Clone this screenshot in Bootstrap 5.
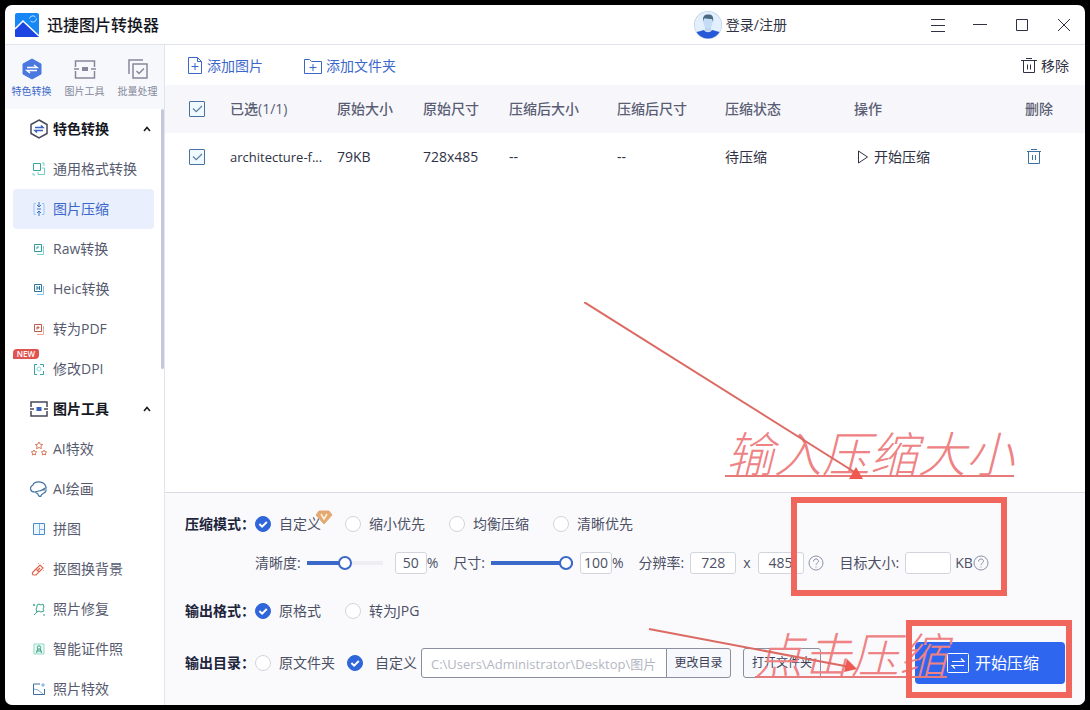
<!DOCTYPE html>
<html lang="zh-CN">
<head>
<meta charset="utf-8">
<meta name="viewport" content="width=device-width, initial-scale=1">
<title>迅捷图片转换器</title>
<link rel="stylesheet" href="https://cdn.jsdelivr.net/npm/bootstrap@5.3.0/dist/css/bootstrap.min.css">
<style>
:root{--ink:#2f3244;--soft:#565a6e;--brand:#3b67cb;--line:#d9dbe4}
body{background:#000;font:14px/20px "Open Sans","Noto Sans CJK SC",sans-serif;color:var(--ink);padding:5px;height:100vh;overflow:hidden}
button{background:none;border:0;padding:0;color:inherit;white-space:nowrap}
a{color:inherit;text-decoration:none}
svg{flex:none;display:block}
svg:not([stroke]){stroke:currentColor}
svg:not([fill]){fill:none}
.app-window{background:#fff;border-radius:7px;height:100%}
.title-bar{height:40px;border-bottom:1px solid #e1e3ea;padding-left:9px}
.app-name{font-size:16px;font-weight:500;color:#15171f;margin-left:7px}
.win-btn{width:42px;height:39px}
.account{margin-right:130px}
.side-bar{width:160px;border-right:1px solid #e2e4ec}
.mode-tabs{height:64px;background:#f7f8fc;padding-top:13px;color:#85889b;font-size:10px;line-height:14px}
.mode-tabs button{flex:1;min-width:0}
.mode-tabs .on{color:var(--brand)}
.side-scroll{padding:0 10px 0 8px}
.thumb-bar{width:3px;height:260px;right:0;top:0;background:#c5c8d8;border-radius:2px}
.side-item{height:40px;padding:0 3px 0 17px;gap:5px;color:var(--soft);border-radius:4px;flex:none}
.side-item.on{background:#e9effc;color:var(--brand)}
.side-head{font-weight:600;color:#15171f}
.new-tag{left:0;top:0;width:26px;height:10px;background:#e0544f;color:#fff;font-size:8px;line-height:10px;font-weight:600;border-radius:4px 2px 4px 0;text-align:center}
.tool-bar{height:40px;padding:2px 16px 0 22px;color:var(--brand)}
.add-folder{margin-left:41px}
.remove-all{color:var(--ink)}
.files{table-layout:fixed;width:100%}
.files th,.files td{height:48px;padding:0;white-space:nowrap}
.files thead{background:#f7f7fb;color:#5a5e74}
.files th{font-weight:500}
.files th:first-child,.files td:first-child{padding-left:24px}
.files .fname{font-size:13px}
.del-btn{color:#3d6f9f}
.w-tick{width:65px}.w-name{width:107px}.w-after{width:108px}.w-orig{width:86px}.w-state{width:129px}.w-del{width:60px}
.tick{appearance:none;width:16px;height:16px;border:1px solid #48719f;border-radius:1px;display:block;background:#f0fafe url("data:image/svg+xml,%3Csvg xmlns='http://www.w3.org/2000/svg' viewBox='0 0 14 14'%3E%3Cpath d='M3 6.5l3.2 3.2L12 4' fill='none' stroke='%23567fa6' stroke-width='1.2'/%3E%3C/svg%3E") center/14px}
.setup{background:#fafafd;border-top:1px solid var(--line);padding:20px 20px 21px;color:#4c5064;border-radius:0 0 7px 0}
.setup-row{min-height:22px;white-space:nowrap}
.row-name{width:70px;font-weight:600;color:#20243a}
.pick{gap:8px;margin-right:24px}
.pick-near{margin-right:12px}
.pick-dir{gap:12px;margin-right:4px}
.pick input{appearance:none;width:16px;height:16px;border:1px solid #d4d5dc;border-radius:50%;background:#fff;flex:none;margin:0}
.pick input:checked{border-color:#2f66da;background:#2f66da url("data:image/svg+xml,%3Csvg xmlns='http://www.w3.org/2000/svg' viewBox='0 0 14 14'%3E%3Cpath d='M3.4 7l2.7 2.6L10.8 5' fill='none' stroke='%23fff' stroke-width='2'/%3E%3C/svg%3E") center/14px}
.vip{left:60px;top:-4px}
.fine-row{margin:17px 0 26px 70px}
.fine-row label{margin-right:6px}
.fine-row .unit{margin-right:15px}
.fine-row .times{margin:0 7px}
.slide{appearance:none;height:14px;width:76px;background:linear-gradient(90deg,#3a69c9 50%,#eeeef3 50%) center/100% 4px no-repeat;margin:0 12px 0 0}
.slide-full{width:82px;background:linear-gradient(#3a69c9,#3a69c9) center/100% 4px no-repeat;margin-right:7px}
.slide::-webkit-slider-thumb{appearance:none;width:14px;height:14px;border:2px solid #3a69c9;border-radius:50%;background:#fff}
.num-box{width:46px;height:22px;border:1px solid #d3d5de;border-radius:3px;background:#fff;color:#4c5064;text-align:center;padding:0 0 1px}
.num-small{width:32px}
.path-box{width:246px;height:30px;border:1px solid #8a8e9e;border-radius:3px 0 0 3px;background:#fff;color:#b4b7c2;padding:0 9px;font-size:13px}
.side-btn{height:30px;font-size:12px;border:1px solid #8a8e9e;background:#f7f8fc;color:#3c4158}
.side-btn.join{width:65px;margin-left:-1px;border-radius:0 3px 3px 0}
.side-btn.alone{width:78px;margin-left:12px;border-radius:3px}
.dir-row{margin-top:20px}
.go-btn{width:150px;height:42px;background:#2f66f0;color:#fff;font-size:16px;border-radius:4px;gap:6px;padding-left:6px}
.notes{right:0;bottom:0;pointer-events:none}
.notes text{font:italic 300 48px "Noto Sans CJK SC",sans-serif;fill:#ee8284;stroke:none}
</style>
</head>
<body class="position-relative">
<div class="app-window d-flex flex-column overflow-hidden">
  <header class="title-bar d-flex align-items-center flex-shrink-0">
    <svg width="26" height="26" viewBox="0 0 26 26" stroke="none"><rect x="1" y="1" width="24" height="24" rx="2" fill="#1687f5"/><path d="M1 17L9 9l16 15a1 1 0 0 1-1 1H2a1 1 0 0 1-1-1z" fill="#1b44e0"/><path d="M1 17L9 9l16 15" stroke="#fff" stroke-width="1.600" fill="none"/><path d="M15.500 6.500a3.500 3.500 0 0 1 6-1.500M22.500 6.500a3.500 3.500 0 0 1-6 2.500" stroke="#bfe2ff" fill="none"/></svg>
    <span class="app-name">迅捷图片转换器</span>
    <button class="account ms-auto d-flex align-items-center gap-1">
      <svg width="28" height="28" viewBox="0 0 28 28" stroke="none"><defs><clipPath id="face"><circle cx="14" cy="14" r="13.500"/></clipPath></defs><circle cx="14" cy="14" r="14" fill="#bfd0e4"/><g clip-path="url(#face)"><circle cx="14" cy="14" r="13.500" fill="#e2effd"/><path d="M1 28v-6c3-2 7-2 9-3 2 3 6 3 8 0 3 1 6 1 9 3v6z" fill="#2559d8"/><path d="M11 14h6v5c-1 2-5 2-6 0z" fill="#b9d3f1"/><ellipse cx="14" cy="11.500" rx="4.500" ry="6" fill="#c5dcf6"/><path d="M9 11V7c1-3 3-4 5-3.500 4-.5 6 2 5 7.500l-1-3c-3 0-5-.5-8-.5z" fill="#4c6a83"/></g></svg>
      <span>登录/注册</span></button>
    <button class="win-btn d-flex align-items-center justify-content-center" aria-label="菜单"><svg width="16" height="16" viewBox="0 0 16 16"><path d="M1 2.500h14M1 8.500h14M1 14.500h14"/></svg></button>
    <button class="win-btn d-flex align-items-center justify-content-center" aria-label="最小化"><svg width="16" height="16" viewBox="0 0 16 16"><path d="M1 7.500h14"/></svg></button>
    <button class="win-btn d-flex align-items-center justify-content-center" aria-label="最大化"><svg width="16" height="16" viewBox="0 0 16 16"><path d="M2.500 2.500h11v11h-11z"/></svg></button>
    <button class="win-btn d-flex align-items-center justify-content-center" aria-label="关闭"><svg width="16" height="16" viewBox="0 0 16 16"><path d="M2 2l12 12M14 2L2 14"/></svg></button>
  </header>

  <div class="d-flex flex-grow-1 overflow-hidden">
    <aside class="side-bar d-flex flex-column flex-shrink-0">
      <div class="mode-tabs d-flex flex-shrink-0">
        <button class="on d-flex flex-column align-items-center gap-1"><svg width="22" height="22" viewBox="0 0 22 22"><path d="M11 1l9 5v10l-9 5-9-5V6z" fill="#4a78df" stroke="#4a78df" stroke-linejoin="round"/><path d="M6 9.500h10l-3-2.500M16 12.500H6l3 2.500" stroke="#fff" stroke-width="1.500"/></svg>特色转换</button>
        <button class="d-flex flex-column align-items-center gap-1"><svg width="22" height="22" viewBox="0 0 22 22" stroke-width="1.500"><path d="M1.500 9V3h19v6M1.500 13v7h19v-7M0 11h5M17 11h5"/><path d="M8 9h6v4H8z" fill="currentColor" stroke="none"/></svg>图片工具</button>
        <button class="d-flex flex-column align-items-center gap-1"><svg width="22" height="22" viewBox="0 0 22 22" stroke-width="1.500"><path d="M2 16V2h14M6 6h14v14H6zM9.500 13l2.500 2.500 5-5"/></svg>批量处理</button>
      </div>
      <div class="flex-grow-1 position-relative overflow-hidden">
      <nav class="side-scroll d-flex flex-column">
        <a href="#" class="side-item side-head d-flex align-items-center"><svg width="18" height="20" viewBox="0 0 18 20"><path d="M9 1l8 4.500v9L9 19l-8-4.500v-9z" stroke="#454958" stroke-width="1.500"/><path d="M5 8.500h8l-2-2M13 11.500H5l2 2" stroke="#3b62c0" stroke-width="1.500"/></svg>特色转换<svg class="ms-auto" width="8" height="6" viewBox="0 0 8 6" stroke-width="1.500"><path d="M1 5l3-3.500L7 5"/></svg></a>
        <a href="#" class="side-item d-flex align-items-center"><svg width="18" height="18" viewBox="0 0 18 18"><path d="M3.500 3.500h7v7h-7z" stroke="#35a79e"/><path d="M12 3h2v3M8 12v2.500h6.500V8H12M3 13v2h2" stroke="#71cfc5"/></svg>通用格式转换</a>
        <a href="#" class="side-item on d-flex align-items-center"><svg width="18" height="18" viewBox="0 0 18 18"><path d="M6 3.500H4v11h2M12 3.500h2v11h-2" stroke="#9cc5f1"/><path d="M9 2v5M7 5l2 2 2-2M9 16v-5M7 13l2-2 2 2M7 9h4" stroke="#3673c5"/></svg>图片压缩</a>
        <a href="#" class="side-item d-flex align-items-center"><svg width="18" height="18" viewBox="0 0 18 18"><path d="M7 14.500h6.500V6" stroke="#7fd4d0"/><path d="M4.500 4.500h7v7h-7zM7 9V7h2" stroke="#319b98"/></svg>Raw转换</a>
        <a href="#" class="side-item d-flex align-items-center"><svg width="18" height="18" viewBox="0 0 18 18"><path d="M7 14.500h6.500V6" stroke="#7cc9ee"/><path d="M4.500 4.500h7v7h-7zM7 6v4M9.500 6v4M7 8h2" stroke="#2b7597"/></svg>Heic转换</a>
        <a href="#" class="side-item d-flex align-items-center"><svg width="18" height="18" viewBox="0 0 18 18"><path d="M7 14.500h6.500V6" stroke="#f1a794"/><path d="M4.500 4.500h7v7h-7zM7 9.500V7h2v1H7" stroke="#bd5b4c"/></svg>转为PDF</a>
        <a href="#" class="side-item position-relative d-flex align-items-center"><span class="new-tag position-absolute">NEW</span><svg width="18" height="18" viewBox="0 0 18 18"><path d="M7 4.500H4.500v10H7M10 4.500h3.500V7M13.500 11v3.500H10" stroke="#35a5a2"/><circle cx="9" cy="9" r="2" stroke="#8bd7d4"/></svg>修改DPI</a>
        <a href="#" class="side-item side-head d-flex align-items-center"><svg width="18" height="16" viewBox="0 0 18 16" stroke="#454958" stroke-width="1.500"><path d="M1 6V1h16v5M1 10v5h16v-5M0 8h4M14 8h4"/><path d="M6.500 6h5v4h-5z" fill="#3b62c0" stroke="none"/></svg>图片工具<svg class="ms-auto" width="8" height="6" viewBox="0 0 8 6" stroke-width="1.500"><path d="M1 5l3-3.500L7 5"/></svg></a>
        <a href="#" class="side-item d-flex align-items-center"><svg width="18" height="18" viewBox="0 0 18 18" stroke="#d8765b"><path d="M9 2l1.200 2.200 2.500.3-1.800 1.700.5 2.500L9 7.500 6.600 8.700l.5-2.500-1.800-1.700 2.500-.3zM4 10l.9 1.700 1.800.2-1.300 1.200.3 1.900L4 14.200 2.300 15l.3-1.900-1.300-1.200 1.800-.2zM14 10l.9 1.700 1.800.2-1.300 1.200.3 1.900-1.700-.8-1.700.8.3-1.900-1.300-1.200 1.800-.2z"/></svg>AI特效</a>
        <a href="#" class="side-item d-flex align-items-center"><svg width="18" height="18" viewBox="0 0 18 18" stroke="#40739f" stroke-width="1.200"><path d="M5 12C0 12-1 7 3 5c1-4 11-5 13 2M17 8c-2-1-5 3-8 3l-4 1 3 2c0 2 2 3 3 2 0-3 4-2 5-5M12 10h5"/></svg>AI绘画</a>
        <a href="#" class="side-item d-flex align-items-center"><svg width="18" height="18" viewBox="0 0 18 18"><path d="M3.500 3.500h11v11h-11z" fill="#edf6ff" stroke="#4c8acb"/><path d="M9.500 4v10M10 9.500h4" stroke="#78aee5"/></svg>拼图</a>
        <a href="#" class="side-item d-flex align-items-center"><svg width="18" height="18" viewBox="0 0 18 18"><path d="M3 12l7-7 3 3-7 7H4c-2 0-2-2-1-3zM6 9l3 3M7 11l3-3" stroke="#dd6651" stroke-width="1.200"/><path d="M8 3l1 1M13 4l1-1M14 10l-1 1" stroke="#f0a287"/></svg>抠图换背景</a>
        <a href="#" class="side-item d-flex align-items-center"><svg width="18" height="18" viewBox="0 0 18 18" stroke="#37a588"><path d="M7 5l2-1 2 1 2-1 1 3-1 2 1 2-3 1-2-1-2 1-1-3 1-2zM8 11l-4 4M3 5h2M4 4v2M13 15h2"/></svg>照片修复</a>
        <a href="#" class="side-item d-flex align-items-center"><svg width="18" height="18" viewBox="0 0 18 18"><path d="M4 4h10v10H4z" stroke="#92d9c5" fill="#e9faf5"/><circle cx="9" cy="7.500" r="1.700" stroke="#349c83"/><path d="M6.500 13l1-4M11.500 13l-1-4M7 11h4" stroke="#349c83"/></svg>智能证件照</a>
        <a href="#" class="side-item d-flex align-items-center"><svg width="18" height="18" viewBox="0 0 18 18"><path d="M10 4H3.500v10.500h11V9" stroke="#3d6da0"/><path d="M4 9l4 1 5 4M13 3v4M11 5h4" stroke="#76abe0"/></svg>照片特效</a>
      </nav>
      <div class="thumb-bar position-absolute"></div>
      </div>
    </aside>

    <main class="d-flex flex-column flex-grow-1 overflow-hidden">
      <div class="tool-bar d-flex align-items-center flex-shrink-0">
        <button class="d-flex align-items-center gap-1"><svg width="16" height="18" viewBox="0 0 16 18"><path d="M1.500.5h9l4 4v12h-13zM10.500.5v4h4M8 6v7M4.500 9.500h7"/></svg>添加图片</button>
        <button class="add-folder d-flex align-items-center gap-1"><svg width="18" height="18" viewBox="0 0 18 18"><path d="M.5 16.500v-14h5l2 2h10v12zM9 7v7M5.500 10.500h7"/></svg>添加文件夹</button>
        <button class="remove-all d-flex align-items-center gap-1 ms-auto"><svg width="16" height="16" viewBox="0 0 16 16"><path d="M0 2.500h16M5 .5h6M2.500 2.500v12h11v-12M6.500 6.500v5M9.500 6.500v5"/></svg>移除</button>
      </div>
      <div class="flex-grow-1 overflow-hidden">
        <table class="files">
          <colgroup><col class="w-tick"><col class="w-name"><col class="w-orig"><col class="w-orig"><col class="w-after"><col class="w-after"><col class="w-state"><col><col class="w-del"></colgroup>
          <thead><tr><th><input class="tick" type="checkbox" checked aria-label="全选"></th><th>已选(1/1)</th><th>原始大小</th><th>原始尺寸</th><th>压缩后大小</th><th>压缩后尺寸</th><th>压缩状态</th><th>操作</th><th>删除</th></tr></thead>
          <tbody><tr><td><input class="tick" type="checkbox" checked aria-label="选择文件"></td><td class="fname">architecture-f...</td><td>79KB</td><td>728x485</td><td>--</td><td>--</td><td>待压缩</td>
            <td><button class="d-flex align-items-center gap-1"><svg width="16" height="16" viewBox="0 0 16 16"><path d="M4.500 2l9 6-9 6z"/></svg>开始压缩</button></td>
            <td><button aria-label="删除" class="del-btn d-block"><svg width="18" height="16" viewBox="0 0 18 16"><path d="M2 2.500h14M6 .5h6M3.500 2.500v12h11v-12M7.500 6v5M10.500 6v5"/></svg></button></td></tr></tbody>
        </table>
      </div>

      <section class="setup flex-shrink-0">
        <div class="setup-row d-flex align-items-center">
          <span class="row-name">压缩模式：</span>
          <label class="pick d-flex align-items-center position-relative"><input type="radio" name="mode" checked>自定义<svg class="vip position-absolute" width="18" height="15" viewBox="0 0 18 15"><path d="M4 1h10l3 4-8 9-8-9z" fill="#e3a973" stroke="#e3a973" stroke-linejoin="round"/><path d="M6 4l3 5 3-5" stroke="#fff2dd" stroke-width="1.500"/></svg></label>
          <label class="pick d-flex align-items-center"><input type="radio" name="mode">缩小优先</label>
          <label class="pick d-flex align-items-center"><input type="radio" name="mode">均衡压缩</label>
          <label class="pick d-flex align-items-center"><input type="radio" name="mode">清晰优先</label>
        </div>
        <div class="setup-row fine-row d-flex align-items-center">
          <label for="clarity">清晰度:</label><input id="clarity" class="slide" type="range" value="50">
          <input class="num-box num-small" type="text" value="50" aria-label="清晰度百分比"><span class="unit">%</span>
          <label for="scale">尺寸:</label><input id="scale" class="slide slide-full" type="range" value="100">
          <input class="num-box num-small" type="text" value="100" aria-label="尺寸百分比"><span class="unit">%</span>
          <label for="res-w">分辨率:</label><input id="res-w" class="num-box" type="text" value="728"><span class="times">x</span><input class="num-box me-1" type="text" value="485" aria-label="高度">
          <svg width="16" height="16" viewBox="0 0 16 16" stroke="#8d92a5"><circle cx="8" cy="8" r="7"/><path d="M5.500 6.500c0-3.500 5-3.200 5-.3C10.500 8 8 8 8 10M8 11.500v1"/></svg>
          <label class="ms-3" for="goal">目标大小:</label><input id="goal" class="num-box me-1" type="text"><span>KB</span>
          <svg width="16" height="16" viewBox="0 0 16 16" stroke="#8d92a5"><circle cx="8" cy="8" r="7"/><path d="M5.500 6.500c0-3.500 5-3.200 5-.3C10.500 8 8 8 8 10M8 11.500v1"/></svg>
        </div>
        <div class="setup-row d-flex align-items-center">
          <span class="row-name">输出格式：</span>
          <label class="pick d-flex align-items-center"><input type="radio" name="fmt" checked>原格式</label>
          <label class="pick d-flex align-items-center"><input type="radio" name="fmt">转为JPG</label>
        </div>
        <div class="setup-row dir-row d-flex align-items-center">
          <span class="row-name">输出目录：</span>
          <label class="pick pick-near d-flex align-items-center"><input type="radio" name="dir">原文件夹</label>
          <label class="pick pick-dir d-flex align-items-center"><input type="radio" name="dir" checked>自定义</label>
          <input class="path-box" type="text" value="C:\Users\Administrator\Desktop\图片" aria-label="输出路径"><button class="side-btn join">更改目录</button>
          <button class="side-btn alone">打开文件夹</button>
          <button class="go-btn ms-auto d-flex align-items-center justify-content-center"><svg width="22" height="20" viewBox="0 0 22 20"><rect x=".5" y=".5" width="21" height="19" rx="1"/><path d="M5 8.500h12l-3-3M17 12.500H5l3 3" stroke-width="1.200"/></svg>开始压缩</button>
        </div>
      </section>
    </main>
  </div>
</div>

<!-- hand-drawn guidance laid over the window, pinned to its lower right corner -->
<svg class="notes position-absolute" width="506" height="408" viewBox="584 302 506 408" stroke="#f0665c">
  <text x="726" y="472">输入压缩大小</text><path d="M725 476h289" stroke="#e6797a" stroke-width="2"/>
  <text x="755" y="673">点击压缩</text><path d="M755 677h192" stroke="#e6797a" stroke-width="2"/>
  <path d="M584 302L856 473" stroke="#dc6a63" stroke-width="2"/><path d="M856 467l7 12h-14z" fill="#ef5a50" stroke="none"/>
  <path d="M649 629L850 667" stroke="#dc6a63" stroke-width="2"/><path d="M847 659l10 10-13 3z" fill="#ef5a50" stroke="none"/>
  <rect x="794" y="500" width="210" height="93" stroke-width="6"/>
  <rect x="909" y="623" width="160" height="72" stroke-width="6"/>
</svg>
<script src="https://cdn.jsdelivr.net/npm/bootstrap@5.3.0/dist/js/bootstrap.bundle.min.js"></script>
</body>
</html>
